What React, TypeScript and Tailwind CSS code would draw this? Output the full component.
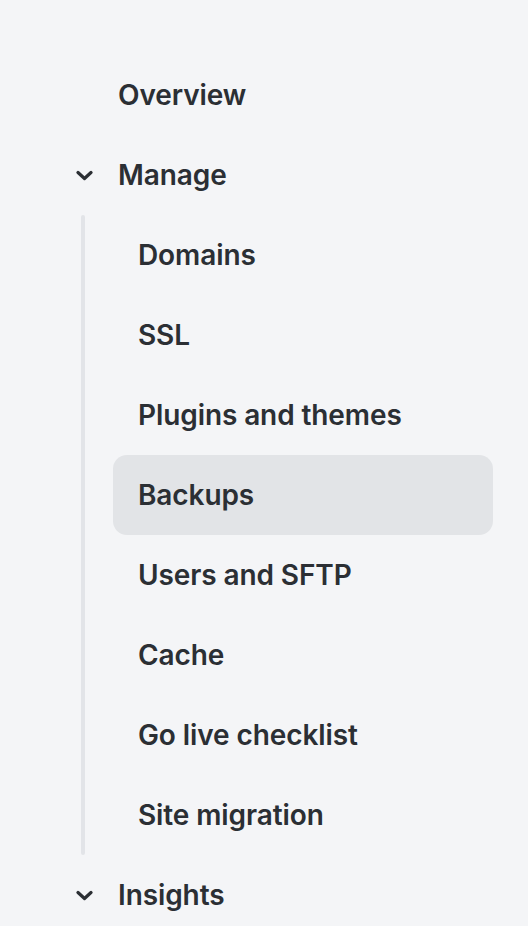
import { ReactNode } from 'react';

const children = [
  'Domains',
  'SSL',
  'Plugins and themes',
  'Backups',
  'Users and SFTP',
  'Cache',
  'Go live checklist',
  'Site migration',
];

function Chevron() {
  return (
    <svg width="17" height="11" viewBox="0 0 17 11" fill="none" className="shrink-0">
      <path d="M2 2.5L8.5 8.5L15 2.5" stroke="#2b2f34" strokeWidth="3.2" strokeLinecap="round" strokeLinejoin="round" />
    </svg>
  );
}

function Section({ label, children }: { label: string; children?: ReactNode }) {
  return (
    <div>
      <div className="h-20 flex items-center pl-[76px]">
        <Chevron />
        <span className="ml-[25px]">{label}</span>
      </div>
      {children}
    </div>
  );
}

export default function App() {
  return (
    <div
      className="w-[528px] h-[926px] overflow-hidden bg-[#f4f5f7] pt-[55px] text-[28px] font-semibold text-[#2b2f34] tracking-[-0.1px]"
      style={{ fontFamily: 'Inter, "Noto Sans", sans-serif' }}
    >
      <div className="h-20 flex items-center pl-[118px]">Overview</div>

      <Section label="Manage">
        <div className="flex">
          <div className="ml-[81px] w-1 rounded-full bg-[#e2e4e8]" />
          <div className="ml-[28px] flex flex-col">
            {children.map((item) => (
              <div
                key={item}
                className={
                  item === 'Backups'
                    ? 'w-[380px] h-20 flex items-center pl-[25px] rounded-[14px] bg-[#e2e4e7]'
                    : 'w-[380px] h-20 flex items-center pl-[25px] rounded-[14px]'
                }
              >
                {item}
              </div>
            ))}
          </div>
        </div>
      </Section>

      <Section label="Insights" />
    </div>
  );
}
